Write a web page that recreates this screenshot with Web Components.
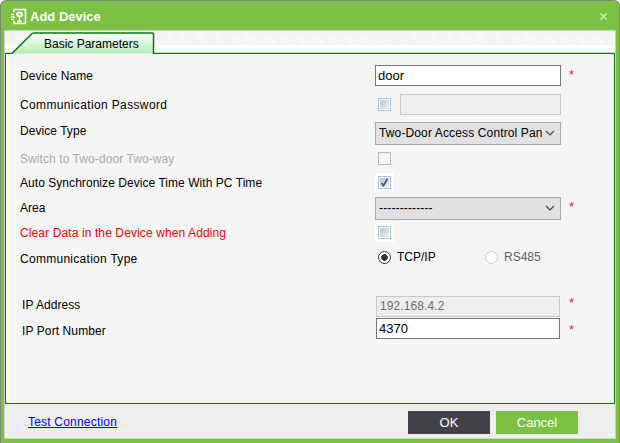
<!DOCTYPE html>
<html>
<head>
<meta charset="utf-8">
<style>
  html, body { margin: 0; height: 100%; background: #fff; }
  body { font: 12px "Liberation Sans", Arial, sans-serif; color: #000; }
</style>
</head>
<body>
<device-dialog heading="Add Device">
  <param-tab slot="tab" label="Basic Parameters"></param-tab>

  <form-row h="27" label="Device Name" track="0.1" star="-1">
    <text-box value="door"></text-box>
  </form-row>
  <form-row h="31" label="Communication Password" track="0.36">
    <div style="display:flex;align-items:center;gap:6px">
      <check-box mark="none"></check-box>
      <text-box disabled style="width:161px"></text-box>
    </div>
  </form-row>
  <form-row h="26" label="Device Type" lift="4" track="0.05">
    <select-box value="Two-Door Access Control Pan"></select-box>
  </form-row>
  <form-row h="25" label="Switch to Two-door Two-way" track="0.08" muted>
    <check-box mark="off"></check-box>
  </form-row>
  <form-row h="23" label="Auto Synchronize Device Time With PC Time" track="0.05">
    <check-box mark="on" halo></check-box>
  </form-row>
  <form-row h="28" label="Area" star="-2">
    <select-box value="-------------"></select-box>
  </form-row>
  <form-row h="21" label="Clear Data in the Device when Adding" track="0.11" danger>
    <check-box mark="none" halo></check-box>
  </form-row>
  <form-row h="28" label="Communication Type" drop="4" track="0.28">
    <div style="display:flex;align-items:center">
      <radio-dot label="TCP/IP" on style="width:107px"></radio-dot>
      <radio-dot label="RS485"></radio-dot>
    </div>
  </form-row>
  <div style="height:24px"></div>
  <form-row h="21" label="IP Address" star="-4" lift="4" track="0.05" indent>
    <text-box disabled value="192.168.4.2" style="width:184px;margin-left:1px"></text-box>
  </form-row>
  <div style="height:1px"></div>
  <form-row h="23" label="IP Port Number" star="1" drop="4" track="0.1" indent>
    <text-box value="4370" style="width:184px;margin-left:1px"></text-box>
  </form-row>

  <a slot="link" href="#" style="color:#00f;letter-spacing:.2px">Test Connection</a>
  <flat-button slot="actions" label="OK" tone="dark"></flat-button>
  <flat-button slot="actions" label="Cancel" tone="green"></flat-button>
</device-dialog>

<script>
class DeviceDialog extends HTMLElement {
  constructor() {
    super();
    this.attachShadow({ mode: "open" });
    this.shadowRoot.innerHTML = `
      <style>
        :host {
          display: flex;
          flex-direction: column;
          width: 620px;
          height: 443px;
          box-sizing: border-box;
          background: #7bc143;
          border: 1px solid #7d8a72;
          border-bottom: 0;
          border-radius: 6px 6px 0 0;
          overflow: hidden;
        }
        .title {
          display: flex;
          align-items: center;
          box-sizing: border-box;
          height: 29px;
          flex: none;
          padding: 2px 9px 0;
          gap: 3px;
          color: #fff;
          font: bold 13px "Liberation Sans", Arial, sans-serif;
        }
        .title span { flex: 1; }
        .close { flex: none; margin-right: 2px; }
        .body {
          flex: 1;
          display: flex;
          flex-direction: column;
          margin: 0 3px 4px;
          background: #eeeeee;
          border: 1px solid #cfcfcf;
          min-height: 0;
        }
        .strip {
          height: 22px;
          flex: none;
          display: flex;
          align-items: flex-end;
          background:
            linear-gradient(#f4f4f4 0 5px, transparent 5px 14px, #fff 14px),
            repeating-linear-gradient(45deg, #f0f0f0 0 1px, #fafafa 1px 2px);
        }
        .panel {
          height: 351px;
          flex: none;
          box-sizing: border-box;
          background: #f5f5f5;
          border: 1px solid #0a7a0a;
          border-top: 0;
          padding: 9px 0 0 14px;
        }
        .foot {
          flex: 1;
          display: flex;
          align-items: center;
          padding: 2px 37px 0 23px;
        }
        .foot .link { flex: 1; }
        .actions { display: flex; gap: 6px; }
      </style>
      <div class="title">
        <svg width="17" height="17" viewBox="0 0 17 17">
          <path d="M4 4V1.500H15.500V15.500H4V13" fill="none" stroke="#fff" stroke-width="1.600"/>
          <path d="M1 6.500h3M1 9h4M1 11.500h3" stroke="#fff" stroke-width="1.300"/>
          <path d="M6 6.500Q6 3.500 9.500 3.500T13 6.500Q13 9 9.500 9T6 6.500Z" fill="#fff"/>
          <path d="M8.500 5.500h2v2h-2z" fill="#7bc143"/>
          <path d="M9.500 9v4M7 13.500h5" stroke="#fff" stroke-width="1.500"/>
        </svg>
        <span id="heading"></span>
        <svg class="close" width="9" height="9" viewBox="0 0 9 9">
          <path d="M1.500 1.500l6 6M7.500 1.500l-6 6" stroke="#c4eeb4" stroke-width="1.600"/>
        </svg>
      </div>
      <div class="body">
        <div class="strip"><slot name="tab"></slot></div>
        <div class="panel"><slot></slot></div>
        <div class="foot">
          <div class="link"><slot name="link"></slot></div>
          <div class="actions"><slot name="actions"></slot></div>
        </div>
      </div>
    `;
    this.shadowRoot.getElementById("heading").textContent = this.getAttribute("heading");
  }
}
customElements.define("device-dialog", DeviceDialog);

class ParamTab extends HTMLElement {
  constructor() {
    super();
    this.attachShadow({ mode: "open" });
    this.shadowRoot.innerHTML = `
      <style>
        :host {
          display: block;
          position: relative;
          width: 150px;
          height: 21px;
        }
        svg { position: absolute; left: 0; top: 0; }
        .text {
          position: absolute;
          left: 39px;
          top: 5px;
          line-height: 14px;
          white-space: nowrap;
        }
      </style>
      <svg width="610" height="22" viewBox="0 0 610 22">
        <defs>
          <linearGradient id="g" x1="0" y1="0" x2="0" y2="1">
            <stop offset="0" stop-color="#ffffff"/>
            <stop offset="1" stop-color="#b5eeb4"/>
          </linearGradient>
        </defs>
        <path d="M5 21.500H6L26 1.500Q27 .8 28 .8H147Q148.500 .8 148.500 2V21.500" fill="url(#g)"/>
        <path d="M0 21.500H7L27 1.500Q27.500 1 29 1H147Q148.500 1 148.500 2.500V21.500H610" fill="none" stroke="#0a7a0a" stroke-width="1.500"/>
      </svg>
      <span class="text"></span>
    `;
    this.shadowRoot.querySelector(".text").textContent = this.getAttribute("label");
  }
}
customElements.define("param-tab", ParamTab);

class FormRow extends HTMLElement {
  constructor() {
    super();
    this.attachShadow({ mode: "open" });
    this.shadowRoot.innerHTML = `
      <style>
        :host {
          display: grid;
          grid-template-columns: 355px 186px 20px;
          align-items: center;
          height: var(--h);
        }
        :host([muted]) .label { color: #aaa; }
        :host([danger]) .label { color: #f00; }
        :host([indent]) .label { padding-left: 2px; }
        .label { white-space: nowrap; line-height: 14px; }
        .star {
          color: #f0143c;
          font: 13px "Liberation Sans", Arial, sans-serif;
          padding-left: 8px;
          visibility: hidden;
        }
      </style>
      <div class="label"></div>
      <div class="control"><slot></slot></div>
      <div class="star">*</div>
    `;
    this.style.setProperty("--h", this.getAttribute("h") + "px");
    const label = this.shadowRoot.querySelector(".label");
    const star = this.shadowRoot.querySelector(".star");
    label.textContent = this.getAttribute("label");
    if (this.hasAttribute("track")) label.style.letterSpacing = this.getAttribute("track") + "px";
    if (this.hasAttribute("lift")) label.style.marginBottom = this.getAttribute("lift") + "px";
    if (this.hasAttribute("drop")) label.style.marginTop = this.getAttribute("drop") + "px";
    if (this.hasAttribute("star")) {
      // star attr is its vertical nudge from the row centre
      const nudge = Number(this.getAttribute("star"));
      star.style.visibility = "visible";
      star.style[nudge < 0 ? "marginBottom" : "marginTop"] = Math.abs(nudge) * 2 + "px";
    }
  }
}
customElements.define("form-row", FormRow);

class TextBox extends HTMLElement {
  constructor() {
    super();
    this.attachShadow({ mode: "open" });
    this.shadowRoot.innerHTML = `
      <style>
        :host {
          display: block;
          box-sizing: border-box;
          width: 186px;
          height: 21px;
          background: #fff;
          border: 1px solid #767676;
          padding: 0 2px;
          line-height: 19px;
          overflow: hidden;
          font-size: 13px;
        }
        :host([disabled]) {
          background: #eeeeee;
          border-color: #c9c9c9;
          color: #6d6d6d;
          font-size: 12px;
          padding-left: 3px;
          letter-spacing: .1px;
        }
      </style>
      <span></span>
    `;
    this.shadowRoot.querySelector("span").textContent = this.getAttribute("value") || "";
  }
}
customElements.define("text-box", TextBox);

class SelectBox extends HTMLElement {
  constructor() {
    super();
    this.attachShadow({ mode: "open" });
    this.shadowRoot.innerHTML = `
      <style>
        :host {
          display: flex;
          align-items: center;
          box-sizing: border-box;
          width: 186px;
          height: 23px;
          background: #e1e1e1;
          border: 1px solid #a9a9a9;
          padding: 0 5px 0 3px;
          letter-spacing: .13px;
        }
        span {
          flex: 1;
          min-width: 0;
          white-space: nowrap;
        }
        svg { flex: none; margin-left: 3px; }
      </style>
      <span></span>
      <svg width="10" height="6" viewBox="0 0 10 6">
        <path d="M1 1l4 4 4-4" fill="none" stroke="#444" stroke-width="1.100"/>
      </svg>
    `;
    this.shadowRoot.querySelector("span").textContent = this.getAttribute("value");
  }
}
customElements.define("select-box", SelectBox);

class CheckBox extends HTMLElement {
  constructor() {
    super();
    this.attachShadow({ mode: "open" });
    this.shadowRoot.innerHTML = `
      <style>
        :host {
          display: block;
          box-sizing: border-box;
          width: 19px;
          height: 19px;
          padding: 3px;
        }
        :host([halo]) { background: #fff; }
        .box {
          box-sizing: border-box;
          width: 13px;
          height: 13px;
          border: 1px solid #a8c3e3;
          padding: 1px;
          background: #f8f8f8;
        }
        .fill {
          width: 9px;
          height: 9px;
          background: linear-gradient(135deg, #c4c4c4, #eeeeee);
        }
        :host([mark="off"]) .box { border-color: #bbb; background: #f4f4f4; }
        :host([mark="off"]) .fill { background: #f4f4f4; }
        svg { display: block; }
      </style>
      <div class="box"><div class="fill"></div></div>
    `;
    if (this.getAttribute("mark") === "on") {
      this.shadowRoot.querySelector(".fill").innerHTML =
        '<svg width="9" height="9" viewBox="0 0 9 9"><path d="M1.500 5l2 2.500L7.500 .8" fill="none" stroke="#4a4aa0" stroke-width="1.700"/></svg>';
    }
  }
}
customElements.define("check-box", CheckBox);

class RadioDot extends HTMLElement {
  constructor() {
    super();
    this.attachShadow({ mode: "open" });
    this.shadowRoot.innerHTML = `
      <style>
        :host {
          display: flex;
          align-items: center;
          gap: 6px;
          padding-left: 3px;
          box-sizing: border-box;
          color: #5c6470;
        }
        :host([on]) { color: #000; }
        .dot {
          box-sizing: border-box;
          width: 13px;
          height: 13px;
          border-radius: 50%;
          background: #fff;
          border: 1px solid #ccc;
        }
        :host([on]) .dot {
          border-color: #333;
          background: radial-gradient(circle, #333 0 3px, #fff 3.500px);
        }
      </style>
      <div class="dot"></div>
      <span></span>
    `;
    this.shadowRoot.querySelector("span").textContent = this.getAttribute("label");
  }
}
customElements.define("radio-dot", RadioDot);

class FlatButton extends HTMLElement {
  constructor() {
    super();
    this.attachShadow({ mode: "open" });
    this.shadowRoot.innerHTML = `
      <style>
        :host {
          display: flex;
          align-items: center;
          justify-content: center;
          width: 82px;
          height: 23px;
          color: #fff;
          font-size: 13px;
          background: #7bc143;
        }
        :host([tone="dark"]) { background: #414247; }
      </style>
      <span></span>
    `;
    this.shadowRoot.querySelector("span").textContent = this.getAttribute("label");
  }
}
customElements.define("flat-button", FlatButton);
</script>
</body>
</html>
